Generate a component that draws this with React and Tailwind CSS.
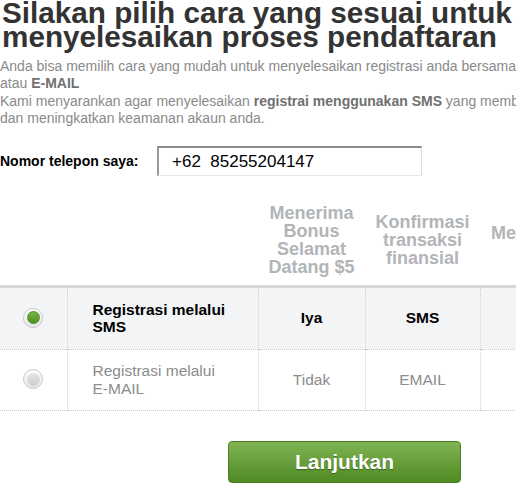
import React from 'react';

const font = { fontFamily: '"Liberation Sans", Arial, sans-serif' };

const Radio = ({ checked }) => (
    <span className="inline-flex h-[20px] w-[20px] items-center justify-center rounded-full border border-[#c9c9c9] bg-gradient-to-b from-[#ffffff] to-[#e6e6e6]">
        {checked ? (
            <span className="h-[13px] w-[13px] rounded-full bg-gradient-to-b from-[#7cbb45] to-[#4c8a1f] shadow-[inset_0_1px_1px_rgba(0,0,0,0.2)]" />
        ) : (
            <span className="h-[13px] w-[13px] rounded-full bg-gradient-to-b from-[#e4e4e4] to-[#cfcfcf]" />
        )}
    </span>
);

const App = () => {
    return (
        <div className="w-[516px] h-[492px] overflow-hidden bg-white" style={font}>
            <div className="w-[689px]">
                <h1 className="pl-[2px] pt-[1px] text-[29.7px] leading-[24px] font-bold text-[#333333] whitespace-nowrap">
                    Silakan pilih cara yang sesuai untuk<br />
                    menyelesaikan proses pendaftaran
                </h1>
                <div className="mt-[9px] text-[14px] leading-[17px] text-[#8a8a8a] whitespace-nowrap">
                    <p>
                        Anda bisa memilih cara yang mudah untuk menyelesaikan registrasi anda bersama dengan SMS<br />
                        atau <b className="text-[#707070]">E-MAIL</b>
                    </p>
                    <p className="mt-[1px]">
                        Kami menyarankan agar menyelesaikan <b className="text-[#707070]">registrai menggunakan SMS</b> yang memberikan bonus<br />
                        dan meningkatkan keamanan akaun anda.
                    </p>
                </div>

                <div className="mt-[19px] flex items-center">
                    <label className="text-[14px] font-bold text-black w-[157px]">Nomor telepon saya:</label>
                    <div className="h-[30px] w-[265px] border-t-2 border-l-2 border-r border-b border-t-[#8a8a8a] border-l-[#9a9a9a] border-r-[#dcdcdc] border-b-[#e6e6e6] flex items-center pl-[13px] text-[17px] text-black whitespace-pre">
                        +62  85255204147
                    </div>
                </div>

                <table className="mt-[20px] w-[689px] border-collapse table-fixed">
                    <colgroup>
                        <col className="w-[67px]" />
                        <col className="w-[191px]" />
                        <col className="w-[107px]" />
                        <col className="w-[115px]" />
                        <col />
                    </colgroup>
                    <thead>
                        <tr className="h-[90px] border-b-[3px] border-[#d6d6d6]">
                            <th></th>
                            <th></th>
                            <th className="align-middle text-center text-[18px] leading-[18px] font-bold text-[#b2b5b8]">
                                Menerima<br />Bonus<br />Selamat<br />Datang $5
                            </th>
                            <th className="align-middle text-center text-[18px] leading-[18px] font-bold text-[#b2b5b8]">
                                Konfirmasi<br />transaksi<br />finansial
                            </th>
                            <th className="align-middle text-left pl-[11px] pb-[14px] text-[18px] leading-[18px] font-bold text-[#b2b5b8]">
                                Metode verifikasi
                            </th>
                        </tr>
                    </thead>
                    <tbody>
                        <tr className="h-[63px] bg-[#f3f4f6] border-b border-dotted border-[#c8c8c8]">
                            <td className="text-center align-middle border-r border-dotted border-[#d0d0d0]">
                                <span className="inline-flex mt-[3px]"><Radio checked /></span>
                            </td>
                            <td className="pl-[25px] align-middle text-[15.5px] leading-[17px] font-bold text-black border-r border-dotted border-[#d0d0d0]">
                                Registrasi melalui<br />SMS
                            </td>
                            <td className="text-center align-middle text-[15.5px] font-bold text-black border-r border-dotted border-[#d0d0d0]">Iya</td>
                            <td className="text-center align-middle text-[15.5px] font-bold text-black border-r border-dotted border-[#d0d0d0]">SMS</td>
                            <td></td>
                        </tr>
                        <tr className="h-[61px] border-b border-dotted border-[#c8c8c8]">
                            <td className="text-center align-middle border-r border-dotted border-[#d0d0d0]">
                                <span className="inline-flex mt-[3px]"><Radio /></span>
                            </td>
                            <td className="pl-[25px] align-middle text-[15.5px] leading-[18px] text-[#8c8c8c] border-r border-dotted border-[#d0d0d0]">
                                Registrasi melalui<br />E-MAIL
                            </td>
                            <td className="text-center align-middle text-[15.5px] text-[#8c8c8c] border-r border-dotted border-[#d0d0d0]">Tidak</td>
                            <td className="text-center align-middle text-[15.5px] text-[#8c8c8c] border-r border-dotted border-[#d0d0d0]">EMAIL</td>
                            <td></td>
                        </tr>
                    </tbody>
                </table>

                <div className="mt-[30px] flex justify-center">
                    <button className="h-[42px] w-[233px] rounded-[4px] border border-[#4d7f22] bg-gradient-to-b from-[#80b452] to-[#4f8a22] text-[21px] font-bold text-white [text-shadow:0_1px_1px_rgba(0,0,0,0.35)]">
                        Lanjutkan
                    </button>
                </div>
            </div>
        </div>
    );
};

export default App;
